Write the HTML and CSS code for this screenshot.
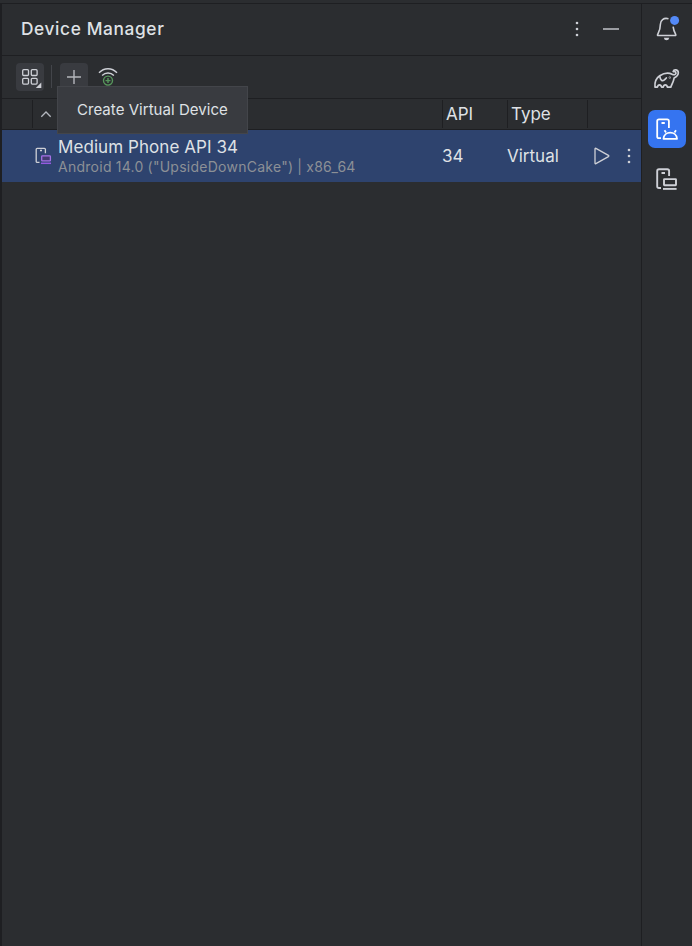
FILE: index.html
```html
<!DOCTYPE html>
<html lang="en">
<head>
<meta charset="utf-8">
<title>Device Manager</title>
<link rel="stylesheet" href="styles.css">
</head>
<body>
<div class="window">
  <main class="panel">
    <header class="title-bar">
      <h1 class="title">Device Manager</h1>
      <svg class="icon-more" width="6" height="18" viewBox="0 0 6 18"><g fill="#ced0d6"><circle cx="3" cy="3" r="1.3"/><circle cx="3" cy="9" r="1.3"/><circle cx="3" cy="15" r="1.3"/></g></svg>
      <svg class="icon-hide" width="16" height="2" viewBox="0 0 16 2"><path d="M0 1h16" stroke="#9b9da2" stroke-width="2"/></svg>
    </header>
    <div class="toolbar">
      <button class="tool group" aria-label="Group">
        <svg width="28" height="28" viewBox="0 0 28 28"><g fill="none" stroke="#ced0d6" stroke-width="1.3"><rect x="6.7" y="6.7" width="5.8" height="5.8" rx="1"/><rect x="15.3" y="6.7" width="5.8" height="5.8" rx="1"/><rect x="6.7" y="15.3" width="5.8" height="5.8" rx="1"/><rect x="15.3" y="15.3" width="5.8" height="5.8" rx="1"/></g><path d="M25.3 19.5v5.5h-5.5z" fill="#ced0d6"/></svg>
      </button>
      <span class="divider"></span>
      <div class="add-wrap">
        <button class="tool" aria-label="Add">
          <svg width="28" height="28" viewBox="0 0 28 28"><path d="M14 7v14M7 14h14" stroke="#b4b6bb" stroke-width="1.4"/></svg>
        </button>
        <div class="tooltip">Create Virtual Device</div>
      </div>
      <svg class="wifi" width="20" height="20" viewBox="0 0 20 20" fill="none"><path d="M1 6.8C6 1.4 14 1.4 19 6.8M4.1 9.4c3.3-3.2 8.5-3.2 11.8 0" stroke="#ced0d6" stroke-width="1.4"/><circle cx="10" cy="14.6" r="4.5" stroke="#57965c" stroke-width="1.4"/><path d="M10 12.1v5M7.5 14.6h5" stroke="#57965c" stroke-width="1.4"/></svg>
    </div>
    <div class="grid table-head">
      <span class="cell"></span>
      <span class="cell sort"><svg width="12" height="8" viewBox="0 0 12 8"><path d="M1.3 6.7 6 2l4.7 4.7" fill="none" stroke="#b4b8bf" stroke-width="1.3"/></svg></span>
      <span class="cell">API</span>
      <span class="cell">Type</span>
      <span class="cell"></span>
    </div>
    <div class="grid device-row">
      <span></span>
      <div class="device">
        <svg class="device-icon" width="17" height="18" viewBox="0 0 17 18" fill="none"><path d="M4.5 15.4H2.2q-1 0-1-1V2.3q0-1 1-1h7.2q1 0 1 1v4" stroke="#ced0d6" stroke-width="1.3"/><path d="M5 3.5h2" stroke="#ced0d6" stroke-width="1.3"/><rect x="6.7" y="8.8" width="8.7" height="5" rx=".6" fill="#443b70" stroke="#a571e6" stroke-width="1.3"/><path d="M6 16.3h10" stroke="#955ae0" stroke-width="1.5"/></svg>
        <div class="device-text"><div class="device-name">Medium Phone API 34</div><div class="device-info">Android 14.0 ("UpsideDownCake") | x86_64</div></div>
      </div>
      <span class="value">34</span>
      <span class="value">Virtual</span>
      <div class="actions">
        <svg width="16" height="18" viewBox="0 0 16 18"><path d="M1 1.9v14.2q0 1 .9.5l12.5-7q.9-.6 0-1.2L1.9 1.4Q1 .9 1 1.9z" fill="none" stroke="#ced0d6" stroke-width="1.3"/></svg>
        <svg width="6" height="18" viewBox="0 0 6 18"><g fill="#ced0d6"><circle cx="3" cy="3" r="1.3"/><circle cx="3" cy="9" r="1.3"/><circle cx="3" cy="15" r="1.3"/></g></svg>
      </div>
    </div>
  </main>
  <nav class="side">
    <button class="side-tool" aria-label="Notifications"><svg width="38" height="38" viewBox="648 10 38 38" fill="none"><path d="M668.5 18.7c-5-1.4-8.1 1.7-8.1 5.6 0 5.1-1 6.5-2.8 10.2q-.4 1 .6 1h16.9q1 0 .6-1c-1.3-2.5-2.2-4.2-2.6-7.8" stroke="#ced0d6" stroke-width="1.6"/><path d="M663.8 37.8h5.5q-.5 2.5-2.8 2.5t-2.7-2.5z" fill="#ced0d6"/><circle cx="674.6" cy="20.4" r="4.5" fill="#548af7"/></svg></button>
    <button class="side-tool" aria-label="Gradle"><svg width="38" height="38" viewBox="648 60 38 38" fill="none" stroke="#ced0d6" stroke-width="1.7" stroke-linecap="round" stroke-linejoin="round"><path d="M673.2 71.4c.7-2.5 5.1-2 5.1 1.4 0 2.8-2.3 4.3-4.2 5.3-.7 4-2 5.5-3.3 9.1h-3.3q-.6-2.4-2.2-2.4t-2.2 2.4h-1.5q-.5-2.4-2.1-2.4t-2.1 2.4H655c-.5-5 1.2-9.2 4.7-11.5 3.6-2.3 8.5-3.6 12.5-1.4 2.4 1.2 4.4-.3 3.5-2.2-.6-1-1.8-.3-2.5-.7"/><path d="M659.8 76.5c.4 3.2 2.4 5.2 4.2 3.7 1-.8 1.7-1.5 2.3-2.2"/><circle cx="669.8" cy="77.6" r=".3"/></svg></button>
    <button class="side-tool active" aria-label="Device Manager"><svg width="38" height="38" viewBox="648 110 38 38" fill="none" stroke="#fff" stroke-width="1.8" stroke-linejoin="round"><path d="M661 138.2h-2q-1.8 0-1.8-1.8v-15.3q0-1.8 1.8-1.8h8.1q1.8 0 1.8 1.8v7M661.5 123h3.3M663.5 138.8c.5-8.3 13-8.3 13.5 0zM666 132.5l-1.5-2.3M674.5 132.5l1.5-2.3"/></svg></button>
    <button class="side-tool" aria-label="Running Devices"><svg width="38" height="38" viewBox="648 160 38 38" fill="none" stroke="#ced0d6" stroke-width="1.9"><path d="M661 188h-2q-1.8 0-1.8-1.8V171q0-1.8 1.8-1.8h8.3q1.8 0 1.8 1.8v5M661.5 173h3.5"/><rect x="664" y="179.1" width="12" height="6.2" rx=".5"/><path d="M663 188.9h13.6"/></svg></button>
  </nav>
</div>
</body>
</html>
```
FILE: styles.css
```css
* { box-sizing: border-box; }
body {
  margin: 0;
  background: #2b2d30;
  color: #dfe1e5;
  font-family: Inter, "Liberation Sans", sans-serif;
  font-size: 17px;
}
button { border: 0; padding: 0; background: none; display: block; }
svg { display: block; flex: none; }
.window {
  display: flex;
  height: 946px;
  padding-top: 3px;
}
.panel {
  width: 642px;
  border: 1px solid #1e1f22;
  border-width: 1px 1px 0 2px;
}
.title-bar {
  display: flex;
  align-items: center;
  height: 52px;
  padding: 0 22px 1px 19px;
  border-bottom: 1px solid #1e1f22;
}
.title {
  flex: 1;
  margin: 0;
  padding-bottom: 2px;
  font-size: 17.3px;
  font-weight: 500;
  letter-spacing: .63px;
}
.icon-more { margin-right: 23px; }
.toolbar {
  display: flex;
  height: 43px;
  padding: 7px 14px;
  border-bottom: 1px solid #1e1f22;
}
.tool {
  width: 28px;
  height: 28px;
  border-radius: 4px;
  background: #393b40;
}
.divider { width: 1px; height: 23px; margin: 2px 8px 0 7px; background: #43454a; }
.add-wrap { position: relative; }
.tooltip {
  position: absolute;
  left: -3px;
  top: 23px;
  width: 191px;
  height: 48px;
  border: 1px solid #43454a;
  background: #393b40;
  padding-left: 19px;
  line-height: 46px;
  font-size: 15px;
  letter-spacing: .04px;
  white-space: nowrap;
}
.wifi { margin: 3px 0 0 10px; }
.grid {
  display: grid;
  grid-template-columns: 31px 410px 65px 80px 1fr;
}
.table-head {
  height: 31px;
  padding-top: 1px;
  border-bottom: 1px solid #1e1f22;
}
.cell {
  height: 28px;
  padding-left: 3px;
  border-right: 1px solid #1e1f22;
  line-height: 28px;
}
.cell:last-child { border: 0; }
.sort { padding: 10px 0 0 7px; }
.device-row { height: 52px; background: #2e436e; }
.device { display: flex; }
.device-icon { margin: 17px 6px 0 2px; }
.device-text { padding-top: 6px; white-space: nowrap; }
.device-name { line-height: 22px; letter-spacing: .07px; }
.device-info { color: #8c9096; font-size: 14px; line-height: 18px; letter-spacing: .26px; word-spacing: -.2px; }
.value { margin-left: -1px; line-height: 52px; }
.actions { display: flex; align-items: center; gap: 16px; padding-left: 6px; }
.side {
  width: 50px;
  display: flex;
  flex-direction: column;
  gap: 12px;
  padding: 6px 6px 0;
  border-top: 1px solid #1e1f22;
}
.side-tool { width: 38px; height: 38px; border-radius: 7px; }
.active { background: #3574f0; }
```
